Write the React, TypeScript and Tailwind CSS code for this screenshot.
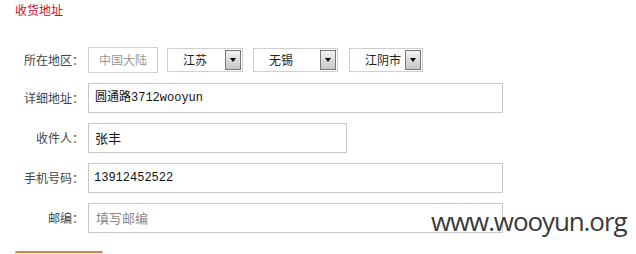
import React from "react";

const cjk = '"Noto Sans CJK SC", "Liberation Sans", sans-serif';
const mono = '"Liberation Mono", "Noto Sans CJK SC", monospace';

const Label = ({ children }: { children: React.ReactNode }) => (
  <div className="w-[84px] shrink-0 text-right text-[12px] text-[#444]">{children}</div>
);

const Select = ({ value, width }: { value: string; width: string }) => (
  <div className={`relative flex h-[24px] items-center border border-[#cfcfcf] bg-white ${width}`}>
    <span className="pl-[15px] text-[12px] text-[#222]">{value}</span>
    <div className="absolute top-px right-px bottom-px flex w-[16px] items-center justify-center border border-[#777] bg-gradient-to-b from-[#f2f2f2] to-[#c6c6c6]">
      <div className="h-0 w-0 border-x-[3px] border-t-[4px] border-x-transparent border-t-black" />
    </div>
  </div>
);

export default function App() {
  return (
    <div className="relative h-[254px] w-[636px] overflow-hidden bg-white" style={{ fontFamily: cjk }}>
      {/* 标题 */}
      <div className="pl-[15px] pt-[2px] text-[12px] leading-[16px] text-[#c8102e]">收货地址</div>

      <div className="mt-[29px] flex flex-col gap-[10px]">
        {/* 所在地区 */}
        <div className="flex h-[26px] items-center">
          <Label>所在地区：</Label>
          <div className="ml-[4px] flex h-[26px] w-[70px] items-center justify-center border border-[#cfcfcf] text-[12px] text-[#999]">
            中国大陆
          </div>
          <div className="ml-[9px]">
            <Select value="江苏" width="w-[76px]" />
          </div>
          <div className="ml-[10px]">
            <Select value="无锡" width="w-[85px]" />
          </div>
          <div className="ml-[11px]">
            <Select value="江阴市" width="w-[74px]" />
          </div>
        </div>

        {/* 详细地址 */}
        <div className="flex h-[30px] items-center">
          <Label>详细地址：</Label>
          <div className="ml-[4px] flex h-[30px] w-[415px] items-center border border-[#c8c8c8] pl-[6px] text-[12px] text-[#111]" style={{ fontFamily: mono }}>
            圆通路3712wooyun
          </div>
        </div>

        {/* 收件人 */}
        <div className="flex h-[30px] items-center">
          <Label>收件人：</Label>
          <div className="ml-[4px] flex h-[30px] w-[259px] items-center border border-[#c8c8c8] pl-[6px] text-[13px] text-[#111]">
            张丰
          </div>
        </div>

        {/* 手机号码 */}
        <div className="flex h-[30px] items-center">
          <Label>手机号码：</Label>
          <div className="ml-[4px] flex h-[30px] w-[415px] items-center border border-[#c8c8c8] pl-[5px] text-[12px] text-[#111]" style={{ fontFamily: mono }}>
            13912452522
          </div>
        </div>

        {/* 邮编 */}
        <div className="flex h-[30px] items-center">
          <Label>邮编：</Label>
          <div className="ml-[4px] flex h-[30px] w-[415px] items-center border border-[#c8c8c8] pl-[7px] text-[13px] text-[#888]">
            填写邮编
          </div>
        </div>
      </div>

      <div className="ml-[15px] mt-[18px] h-[30px] w-[88px] rounded-t-[2px] border-t-2 border-[#cf8454] bg-[#fbe9dc]" />

      {/* 水印 */}
      <div
        className="absolute left-[431px] top-[204px] text-[26px] leading-[34px] tracking-[-1.1px] text-[#3a3a3a]"
        style={{ fontFamily: '"Open Sans", sans-serif' }}
      >
        www.wooyun.org
      </div>
    </div>
  );
}
